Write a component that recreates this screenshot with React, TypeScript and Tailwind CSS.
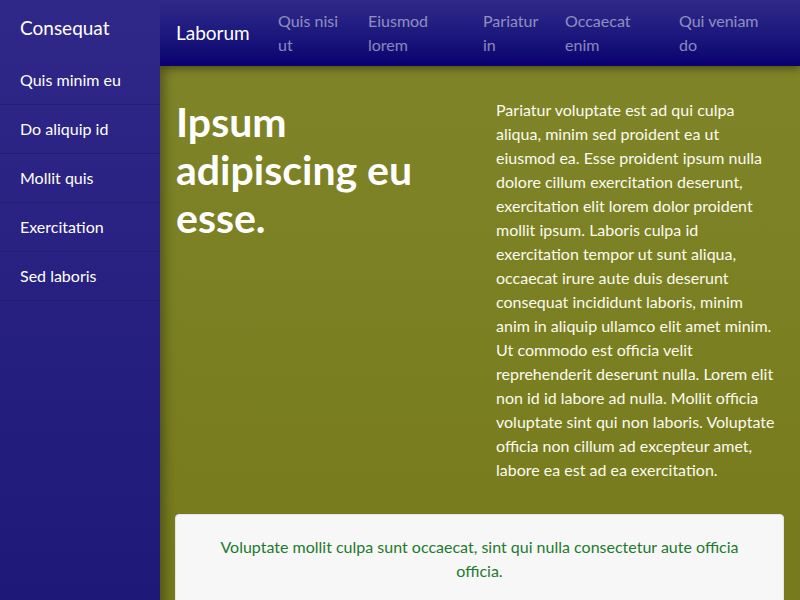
import React from "react";

const sideItems = ["Quis minim eu", "Do aliquip id", "Mollit quis", "Exercitation", "Sed laboris"];
const navLinks: [string, string][] = [
  ["Quis nisi", "ut"],
  ["Eiusmod", "lorem"],
  ["Pariatur", "in"],
  ["Occaecat", "enim"],
  ["Qui veniam", "do"],
];

export default function App() {
  return (
    <div className="flex h-[600px] w-[800px] overflow-hidden font-['Lato',sans-serif] text-white">
      <aside className="relative z-20 flex w-[160px] shrink-0 flex-col bg-gradient-to-b from-[#302888] to-[#1e1879]">
        <div className="px-5 py-[14px] text-[19px] leading-7">Consequat</div>
        <ul>
          {sideItems.map((s) => (
            <li key={s} className="border-b border-[#1f1a66]/60 px-5 py-3 text-base leading-6">
              {s}
            </li>
          ))}
        </ul>
      </aside>
      <div className="flex min-w-0 flex-1 flex-col">
        <header className="relative z-10 grid h-[66px] shrink-0 grid-cols-[102px_90px_115px_82px_114px_1fr] items-center bg-gradient-to-b from-[#31298a] to-[#0a0070] pl-4 shadow-[0_3px_8px_rgba(0,0,0,0.35)]">
          <div className="text-[19px] leading-7">Laborum</div>
          {navLinks.map(([a, b]) => (
            <div key={a} className="text-base leading-6 text-white/50">
              {a}
              <br />
              {b}
            </div>
          ))}
        </header>
        <main className="flex-1 bg-gradient-to-b from-[#7f8428] to-[#767a1c] px-4 pt-8 shadow-[inset_10px_0_12px_-6px_rgba(0,0,0,0.35)]">
          <div className="grid grid-cols-2 gap-8">
            <h1 className="text-[41px] font-bold leading-[48px]">Ipsum adipiscing eu esse.</h1>
            <p className="max-w-[284px] text-base leading-6 text-[#fbfbee]">
              Pariatur voluptate est ad qui culpa aliqua, minim sed proident ea ut eiusmod ea. Esse proident ipsum nulla dolore cillum exercitation deserunt, exercitation elit lorem dolor proident mollit ipsum. Laboris culpa id exercitation tempor ut sunt aliqua, occaecat irure aute duis deserunt consequat incididunt laboris, minim anim in aliquip ullamco elit amet minim. Ut commodo est officia velit reprehenderit deserunt nulla. Lorem elit non id id labore ad nulla. Mollit officia voluptate sint qui non laboris. Voluptate officia non cillum ad excepteur amet, labore ea est ad ea exercitation.
            </p>
          </div>
          <div className="mt-8 -ml-px rounded border border-[#e4e4e4] bg-[#f7f7f7] px-10 pb-10 pt-5 text-center text-base leading-6 text-[#237a2c]">
            Voluptate mollit culpa sunt occaecat, sint qui nulla consectetur aute officia officia.
          </div>
        </main>
      </div>
    </div>
  );
}
